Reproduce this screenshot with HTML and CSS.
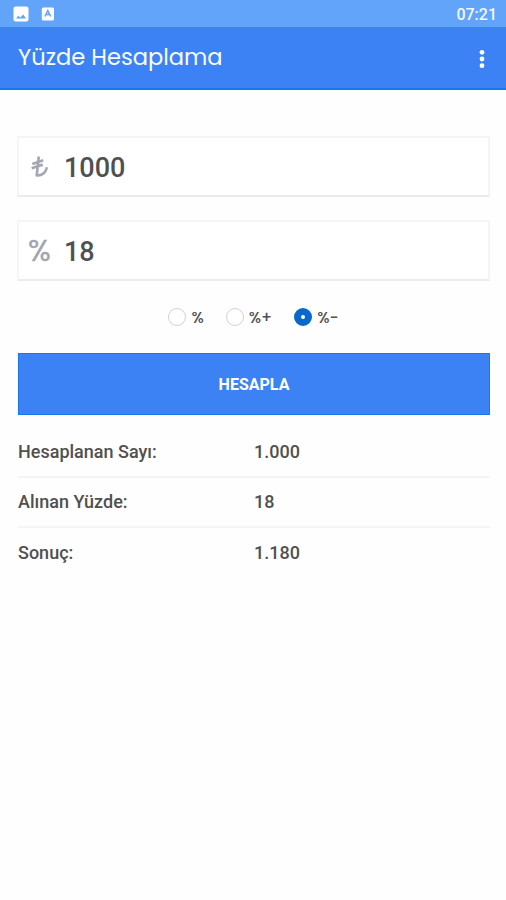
FILE: index.html
```html
<!DOCTYPE html>
<html lang="tr">
<head>
<meta charset="utf-8">
<title>Yüzde Hesaplama</title>
<link rel="stylesheet" href="styles.css">
</head>
<body>
<div class="status">
  <svg class="status-image" width="16" height="16" viewBox="0 0 16 16"><rect x=".5" y=".5" width="15" height="15" rx="2" fill="#fff"/><path d="M3 12.500l2.300-2.700 2 1.600 2.900-3 2.800 4.100z" fill="#62a4fa"/></svg>
  <svg class="status-app" width="14" height="14" viewBox="0 0 14 14"><rect x=".8" y=".5" width="12.200" height="13" rx="1.500" fill="#fff"/><path d="M4 9.500l2.800-6L9.700 9.500M5.200 7.500h3.300" fill="none" stroke="#62a4fa" stroke-width="1.500"/></svg>
  <span class="clock">07:21</span>
</div>
<header class="appbar">
  <h1>Yüzde Hesaplama</h1>
  <svg class="menu" width="6" height="20" viewBox="0 0 6 20" fill="#fff"><circle cx="3" cy="3.300" r="2.400"/><circle cx="3" cy="10" r="2.400"/><circle cx="3" cy="16.700" r="2.400"/></svg>
</header>
<main>
  <div class="field">
    <svg class="lira" width="24" height="24" viewBox="0 0 24 24" fill="none" stroke="#a4a8b3" stroke-width="2.700" stroke-linejoin="round"><path d="M10.800 1.500L8.700 20.300c5 .6 9-2.500 10.300-8M4.300 9l11-3.700M3.700 13.300l11-3.700"/></svg>
    <span class="value">1000</span>
  </div>
  <div class="field">
    <span class="percent">%</span>
    <span class="value">18</span>
  </div>
  <div class="options">
    <label class="option"><i class="radio"></i><span>%</span></label>
    <label class="option"><i class="radio"></i><span>%+</span></label>
    <label class="option"><i class="radio checked"></i><span>%-</span></label>
  </div>
  <button class="submit">HESAPLA</button>
  <dl class="results">
    <div class="row"><dt>Hesaplanan Sayı:</dt><dd>1.000</dd></div>
    <div class="row"><dt>Alınan Yüzde:</dt><dd>18</dd></div>
    <div class="row"><dt>Sonuç:</dt><dd>1.180</dd></div>
  </dl>
</main>
</body>
</html>
```
FILE: styles.css
```css
* { box-sizing: border-box; }
body { margin: 0; background: #fefefe; color: #505050; font-family: Roboto, sans-serif; }
.status { display: flex; align-items: center; height: 27px; padding: 1px 9px 0 13px; background: #62a4fa; }
.status-app { margin-left: 12px; }
.clock { margin-left: auto; color: #f4f8ff; font-size: 16px; font-weight: 500; line-height: 27px; }
.appbar { display: flex; align-items: center; justify-content: space-between; height: 63px; padding: 0 21px 0 18px; background: #3c82f5; border-bottom: 2px solid #1677ee; }
.menu { margin-top: 2px; }
h1 { margin: 0; padding-bottom: 2px; color: #f8fbff; font-family: Poppins, Inter, sans-serif; font-size: 22.6px; font-weight: 400; line-height: 32px; }
main { padding: 46px 16px 0 17px; }
.field { display: flex; align-items: center; height: 61px; margin-bottom: 23px; padding-top: 2px; border: 2px solid #f5f5f5; border-bottom-color: #ebebeb; background: #fff; }
.lira { width: 24px; margin: 0 0 1px 9px; }
.percent { width: 24px; margin: 0 0 2px 9px; color: #a0a4b0; font-family: Poppins, sans-serif; font-size: 30px; font-weight: 400; line-height: 32px; -webkit-text-stroke: .3px #a0a4b0; }
.value { margin-left: 12px; font-size: 27px; font-weight: 500; line-height: 32px; }
.options { display: flex; justify-content: center; gap: 22px; height: 26px; align-items: center; }
.option { display: flex; align-items: center; gap: 5px; font-family: Poppins, sans-serif; font-size: 15.5px; font-weight: 500; }
.radio { width: 18px; height: 18px; border: 1px solid #d2d2d2; border-radius: 50%; background: #fff; }
.radio.checked { border: 7px solid #0967cd; }
.submit { display: block; width: 472px; height: 62px; margin: 23px 0 0 1px; padding: 1px 0 0; border: 1px solid #1677ee; background: #3c82f5; color: #fff; font: 700 16px/20px Roboto, sans-serif; }
.results { margin: 12px 0 0 1px; font-size: 18px; font-weight: 500; }
.row { display: grid; grid-template-columns: 1fr 1fr; align-items: center; height: 50.5px; border-bottom: 2px solid #f4f4f4; }
.row:last-child { height: 49px; border-bottom: 0; }
dt, dd { margin: 0; }
```
